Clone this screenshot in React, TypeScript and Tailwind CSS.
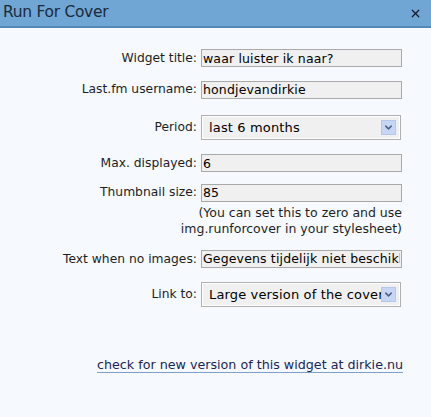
import { ChevronDown, X } from "lucide-react";

const font = "font-['DejaVu_Sans','Verdana',sans-serif]";

function Field({ value }: { value: string }) {
  return (
    <input
      readOnly
      value={value}
      className={`${font} block w-[201px] h-[18px] border border-[#a9a9a9] bg-[#f0f0f0] px-[1px] text-[12.5px] tracking-[0.15px] leading-[16px] text-black outline-none`}
    />
  );
}

function Select({ value }: { value: string }) {
  return (
    <div className="relative w-[200px] h-[25px] border border-[#b0b0b0] bg-[#f0f0f0] shadow-[inset_0_0_0_1px_#ffffff] overflow-hidden">
      <span className={`${font} absolute left-[7px] top-[3px] text-[13px] tracking-[0.15px] leading-[17px] text-black whitespace-nowrap`}>
        {value}
      </span>
      <div className="absolute right-[4px] top-[4px] w-[15px] h-[15px] bg-[#c6d6f3] border border-[#b4c6ea] flex items-center justify-center">
        <ChevronDown className="w-[11px] h-[11px] text-[#4d6185]" strokeWidth={3.2} />
      </div>
    </div>
  );
}

function Row({ label, children, className }: { label: string; children: React.ReactNode; className?: string }) {
  return (
    <div className={`flex items-center ${className ?? ""}`}>
      <label className={`${font} w-[198px] pr-[1px] text-right text-[12.3px] text-[#1e1e1e] whitespace-nowrap`}>
        {label}
      </label>
      <div className="ml-[3px]">{children}</div>
    </div>
  );
}

export default function App() {
  return (
    <div className="w-[431px] h-[417px] bg-[#f6faff] overflow-hidden">
      <div className="h-[28px] bg-[#6fa6d4] border-b-2 border-[#4f88b9] flex items-center justify-between pl-[3px] pr-[9px]">
        <span className={`${font} text-[15.5px] text-[#1b2a3a] tracking-[-0.3px]`}>Run For Cover</span>
        <X className="w-[13px] h-[13px] text-[#141c2c]" strokeWidth={2.2} />
      </div>

      <div className="pt-[21px]">
        <Row label="Widget title:">
          <Field value="waar luister ik naar?" />
        </Row>
        <Row label="Last.fm username:" className="mt-[13px]">
          <Field value="hondjevandirkie" />
        </Row>
        <Row label="Period:" className="mt-[16px]">
          <Select value="last 6 months" />
        </Row>
        <Row label="Max. displayed:" className="mt-[14px]">
          <Field value="6" />
        </Row>
        <Row label="Thumbnail size:" className="mt-[11px]">
          <Field value="85" />
        </Row>
        <p className={`${font} w-[402px] text-right text-[12.5px] leading-[16px] text-[#1e1e1e] mt-[3px]`}>
          (You can set this to zero and use
          <br />
          img.runforcover in your stylesheet)
        </p>
        <Row label="Text when no images:" className="mt-[13px]">
          <Field value="Gegevens tijdelijk niet beschikbaar" />
        </Row>
        <Row label="Link to:" className="mt-[14px]">
          <Select value="Large version of the cover" />
        </Row>
        <div className="mt-[44px] pl-[97px]">
          <a
            href="#"
            className={`${font} text-[12.7px] text-[#1a2456] no-underline border-b border-[#7f9fc8] leading-[15px] inline-block`}
          >
            check for new version of this widget at dirkie.nu
          </a>
        </div>
      </div>
    </div>
  );
}
